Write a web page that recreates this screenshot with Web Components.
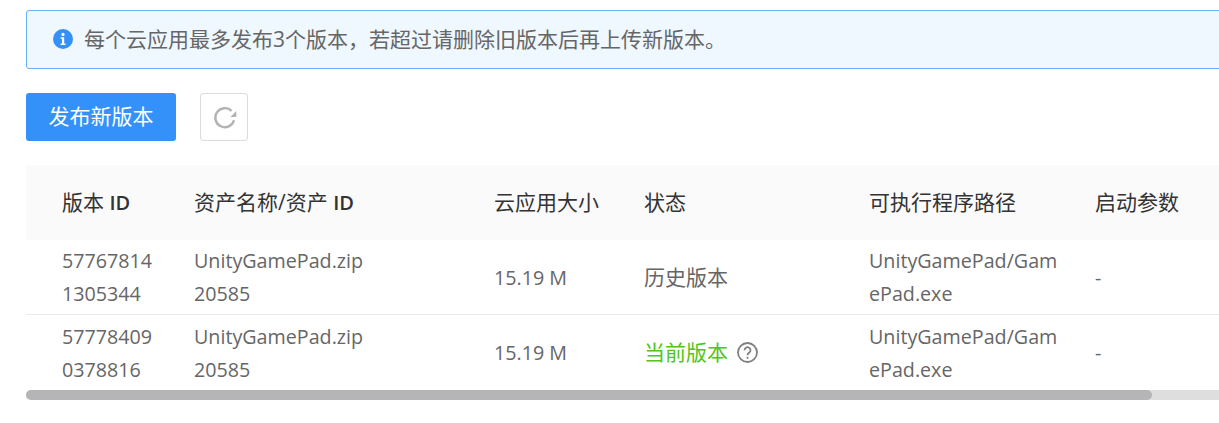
<!DOCTYPE html>
<html lang="zh">
<head>
<meta charset="utf-8">
<title>版本管理</title>
<style>
  html, body { margin: 0; height: 423px; overflow: hidden; background: #fff; }
  body { font: 21px/33px "Open Sans", "Noto Sans CJK SC", sans-serif; color: #666; }
</style>
</head>
<body>
<version-page>
  <info-alert>每个云应用最多发布3个版本，若超过请删除旧版本后再上传新版本。</info-alert>
  <version-toolbar></version-toolbar>
  <version-table></version-table>
</version-page>

<script>
class VersionPage extends HTMLElement {
  constructor() {
    super();
    this.attachShadow({ mode: 'open' }).innerHTML = `
      <style>
        :host {
          display: flex;
          flex-direction: column;
          gap: 24px;
          width: 1320px;
          padding: 10px 0 0 26px;
        }
      </style>
      <slot></slot>
    `;
  }
}

class InfoAlert extends HTMLElement {
  constructor() {
    super();
    this.attachShadow({ mode: 'open' }).innerHTML = `
      <style>
        :host {
          display: flex;
          align-items: center;
          gap: 11px;
          box-sizing: border-box;
          height: 59px;
          padding: 0 26px;
          background: #eff7ff;
          border: 1.5px solid #66b0ff;
          border-radius: 3px;
          color: #666;
        }
        svg { width: 20px; height: 20px; flex: none; margin-top: -2px; }
      </style>
      <svg viewBox="0 0 20 20">
        <circle cx="10" cy="10" r="10" fill="#3491fa"/>
        <circle cx="10" cy="5.4" r="1.6" fill="#fff"/>
        <path d="M7.6 8.2h3.6v6.4h1.3v1.5H7.6v-1.5h1.4V9.7H7.6z" fill="#fff"/>
      </svg>
      <span><slot></slot></span>
    `;
  }
}

class VersionToolbar extends HTMLElement {
  constructor() {
    super();
    this.attachShadow({ mode: 'open' }).innerHTML = `
      <style>
        :host { display: flex; gap: 24px; }
        button {
          box-sizing: border-box;
          height: 48px;
          border-radius: 3px;
          font: inherit;
          padding: 0;
        }
        .primary {
          width: 150px;
          background: #3491fa;
          border: 0;
          color: #fff;
          padding-bottom: 2px;
        }
        .icon {
          width: 48px;
          display: flex;
          align-items: center;
          justify-content: center;
          background: #fff;
          border: 1.5px solid #dcdcdc;
        }
        svg { width: 26px; height: 26px; }
      </style>
      <button class="primary">发布新版本</button>
      <button class="icon" aria-label="刷新">
        <svg viewBox="0 0 26 26" fill="none">
          <path d="M20.6 7A9.5 9.5 0 1 0 23 16.2" stroke="#b3b3b3" stroke-width="2.4"/>
          <path d="M25.3 7v5.9h-5.9z" fill="#b3b3b3"/>
        </svg>
      </button>
    `;
  }
}

const COLUMNS = ['版本 <b>ID</b>', '资产名称/资产 <b>ID</b>', '云应用大小', '状态', '可执行程序路径', '启动参数'];
const ROWS = [
  { id: '577678141305344', asset: ['UnityGamePad.zip', '20585'], size: '15.19 M', current: false },
  { id: '577784090378816', asset: ['UnityGamePad.zip', '20585'], size: '15.19 M', current: true }
];

class VersionTable extends HTMLElement {
  constructor() {
    super();
    const head = COLUMNS.map((c) => `<div class="cell head"><span>${c}</span></div>`).join('');
    const rows = ROWS.map((r) => `
      <div class="cell body latin"><span class="id">${r.id}</span></div>
      <div class="cell body latin"><span>${r.asset[0]}<br>${r.asset[1]}</span></div>
      <div class="cell body latin">${r.size}</div>
      <div class="cell body">${r.current
        ? `<span class="current">当前版本</span>
           <svg class="help" viewBox="0 0 21 21" fill="none">
             <circle cx="10.5" cy="10.5" r="9.5" stroke="#808080" stroke-width="1.8"/>
             <path d="M7.5 8.2a3 3 0 1 1 4.8 2.4c-1.2.8-1.8 1.2-1.8 2.6" stroke="#808080" stroke-width="1.8"/>
             <circle cx="10.5" cy="15.8" r="1.1" fill="#808080"/>
           </svg>`
        : '历史版本'}</div>
      <div class="cell body latin"><span class="path">UnityGamePad/GamePad.exe</span></div>
      <div class="cell body latin">-</div>
    `).join('');
    this.attachShadow({ mode: 'open' }).innerHTML = `
      <style>
        :host { display: block; }
        .grid {
          display: grid;
          grid-template-columns: 150px 300px 150px 225px 226px 243px;
          grid-template-rows: 75px 75px 75px;
        }
        .cell {
          display: flex;
          align-items: center;
          box-sizing: border-box;
          padding: 0 18px;
          min-width: 0;
        }
        .cell:nth-child(6n+1) { padding-left: 36px; }
        .head { background: #fafafa; color: #333; }
        .head b { font-size: 20px; font-weight: 600; }
        .body { border-bottom: 1px solid #ebebeb; }
        .body:nth-last-child(-n+6) { border-bottom: 0; }
        .latin { font-size: 19.7px; }
        .id, .path { display: block; word-break: break-all; }
        .id { width: 96px; }
        .path { width: 190px; }
        .current { color: #52c41a; }
        .help { width: 21px; height: 21px; margin-left: 9px; flex: none; }
        .track {
          height: 10px;
          background: #dedede;
          border-radius: 5px;
        }
        .thumb {
          width: 1126px;
          height: 100%;
          background: #b5b5b8;
          border-radius: 5px;
        }
      </style>
      <div class="grid">${head}${rows}</div>
      <div class="track"><div class="thumb"></div></div>
    `;
  }
}

customElements.define('version-page', VersionPage);
customElements.define('info-alert', InfoAlert);
customElements.define('version-toolbar', VersionToolbar);
customElements.define('version-table', VersionTable);
</script>
</body>
</html>
